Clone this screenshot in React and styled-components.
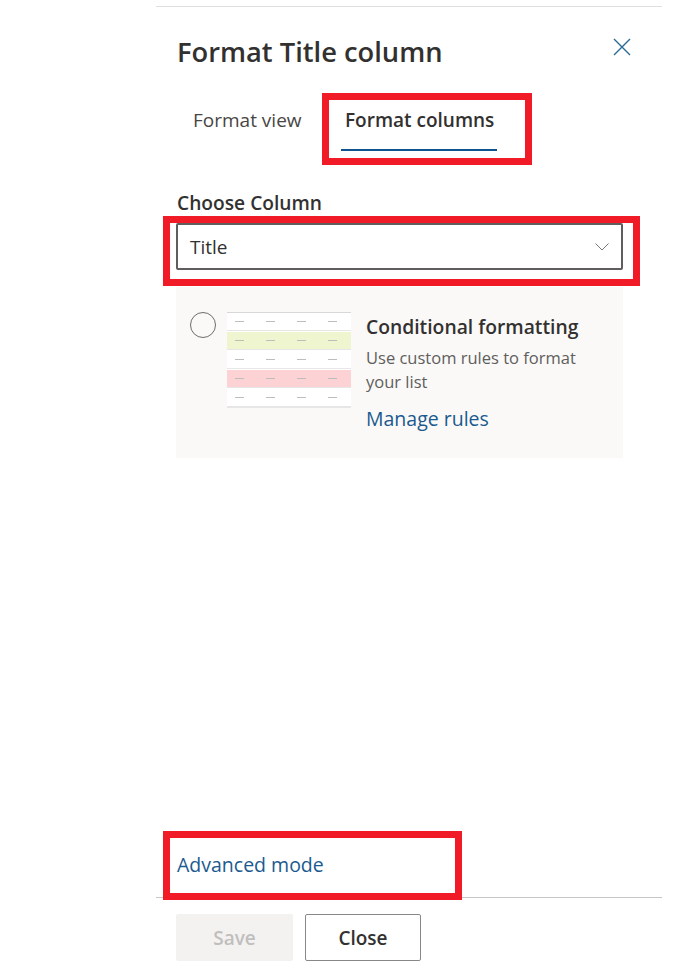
import styled, { createGlobalStyle } from "styled-components";

const GlobalStyle = createGlobalStyle`
  html, body {
    margin: 0;
    padding: 0;
    background: #fff;
  }
  body {
    font-family: "Open Sans", "Noto Sans", sans-serif;
    color: #323130;
  }
`;

const Panel = styled.div`
  box-sizing: border-box;
  width: 506px;
  height: 971px;
  margin-left: 156px;
  padding-top: 6px;
  display: flex;
  flex-direction: column;
`;

const TopRule = styled.div`
  height: 1px;
  background: #e1dfdd;
`;

const Body = styled.div`
  flex: 1;
  display: flex;
  flex-direction: column;
  padding: 0 39px 0 20px;
`;

const Header = styled.div`
  display: flex;
  justify-content: space-between;
  align-items: flex-start;
  height: 85px;
`;

const Title = styled.h1`
  margin: 27px 0 0 1px;
  font-size: 27.3px;
  line-height: 36px;
  font-weight: 600;
  color: #323130;
  white-space: nowrap;
`;

const CloseIcon = styled.svg`
  width: 18px;
  height: 18px;
  margin: 31px -8px 0 0;
  stroke: #2b6a94;
  stroke-width: 1.4;
  fill: none;
`;

const Tabs = styled.div`
  display: flex;
  height: 59px;
  margin-left: 13px;
`;

const Tab = styled.div`
  box-sizing: border-box;
  height: 59px;
  padding: 14px 4px 0;
  font-size: 19px;
  line-height: 28px;
  font-weight: ${(p) => (p.$active ? 600 : 400)};
  color: ${(p) => (p.$active ? "#323130" : "#484644")};
  border-bottom: 2px solid ${(p) => (p.$active ? "#0f548c" : "transparent")};
  width: ${(p) => p.$width}px;
  white-space: nowrap;
`;

const Highlight = styled.div`
  position: relative;
  &::after {
    content: "";
    position: absolute;
    top: ${(p) => p.$top}px;
    right: ${(p) => p.$right}px;
    bottom: ${(p) => p.$bottom}px;
    left: ${(p) => p.$left}px;
    border: 7px solid #f11a27;
    pointer-events: none;
  }
`;

const FieldLabel = styled.label`
  display: block;
  margin: 40px 0 8px 1px;
  font-size: 19.2px;
  line-height: 24px;
  font-weight: 600;
  color: #323130;
`;

const Select = styled.div`
  box-sizing: border-box;
  height: 47px;
  display: flex;
  align-items: center;
  justify-content: space-between;
  padding: 0 12px;
  border: 2px solid #605e5c;
  border-radius: 2px;
  font-size: 19px;
  color: #323130;
`;

const Chevron = styled.svg`
  width: 14px;
  height: 8px;
  stroke: #7a7876;
  stroke-width: 1;
  fill: none;
`;

const Card = styled.div`
  box-sizing: border-box;
  height: 171px;
  margin-top: 17px;
  padding: 25px 30px 0 14px;
  display: flex;
  align-items: flex-start;
  background: #faf9f8;
`;

const Radio = styled.div`
  box-sizing: border-box;
  flex: none;
  width: 26px;
  height: 26px;
  border: 1.5px solid #6f6d6b;
  border-radius: 50%;
`;

const Preview = styled.div`
  flex: none;
  width: 124px;
  margin: 0 15px 0 11px;
  background: #fff;
  border-top: 1px solid #d8d8d8;
`;

const PreviewRow = styled.div`
  height: 17px;
  display: grid;
  grid-template-columns: repeat(4, 31px);
  align-items: center;
  padding-left: 8px;
  background: ${(p) => p.$bg || "#fff"};
  border-bottom: 1px solid #e6e6e6;
  margin-bottom: 1px;
  &:last-child {
    margin-bottom: 0;
    border-bottom-width: 2px;
  }
`;

const Dash = styled.span`
  width: 9px;
  height: 1px;
  background: #bdbdbd;
`;

const CardText = styled.div`
  flex: 1;
  padding-top: 2px;
`;

const CardTitle = styled.div`
  font-size: 19.3px;
  line-height: 26px;
  font-weight: 600;
  color: #323130;
  white-space: nowrap;
`;

const CardDesc = styled.div`
  margin-top: 6px;
  font-size: 16.5px;
  line-height: 24px;
  color: #605e5c;
`;

const ActionLink = styled.a`
  display: block;
  font-size: 19.5px;
  line-height: 26px;
  color: #1b5a8f;
`;

const CardLink = styled(ActionLink)`
  margin-top: 12px;
`;

const AdvancedWrap = styled(Highlight)`
  margin-top: auto;
  margin-bottom: 19px;
  padding-left: 1px;
`;

const FooterRule = styled.div`
  height: 1px;
  background: #c8c6c4;
`;

const Footer = styled.div`
  display: flex;
  gap: 12px;
  padding: 16px 0 10px 20px;
`;

const Button = styled.button`
  box-sizing: border-box;
  width: ${(p) => p.$width}px;
  height: 47px;
  font-family: inherit;
  font-size: 19px;
  font-weight: 600;
  border-radius: 2px;
  border: 1px solid ${(p) => (p.disabled ? "#f3f2f1" : "#8a8886")};
  background: ${(p) => (p.disabled ? "#f3f2f1" : "#fff")};
  color: ${(p) => (p.disabled ? "#c0bfbd" : "#323130")};
`;

const previewRows = ["#fff", "#eff6cf", "#fff", "#fdd2d4", "#fff"];

export default function App() {
  return (
    <>
      <GlobalStyle />
      <Panel>
        <TopRule />
        <Body>
          <Header>
            <Title>Format Title column</Title>
            <CloseIcon viewBox="0 0 18 18">
              <path d="M1 1 L17 17 M17 1 L1 17" />
            </CloseIcon>
          </Header>
          <Tabs>
            <Tab $width={152}>Format view</Tab>
            <Highlight $top={1} $right={-35} $bottom={-14} $left={-19}>
              <Tab $active $width={156}>Format columns</Tab>
            </Highlight>
          </Tabs>
          <FieldLabel>Choose Column</FieldLabel>
          <Highlight $top={-7} $right={-17} $bottom={-16} $left={-13}>
            <Select>
              Title
              <Chevron viewBox="0 0 14 8">
                <path d="M0.5 0.5 L7 7 L13.5 0.5" />
              </Chevron>
            </Select>
          </Highlight>
          <Card>
            <Radio />
            <Preview>
              {previewRows.map((bg, i) => (
                <PreviewRow key={i} $bg={bg}>
                  <Dash />
                  <Dash />
                  <Dash />
                  <Dash />
                </PreviewRow>
              ))}
            </Preview>
            <CardText>
              <CardTitle>Conditional formatting</CardTitle>
              <CardDesc>Use custom rules to format your list</CardDesc>
              <CardLink>Manage rules</CardLink>
            </CardText>
          </Card>
          <AdvancedWrap $top={-21} $right={161} $bottom={-22} $left={-13}>
            <ActionLink>Advanced mode</ActionLink>
          </AdvancedWrap>
        </Body>
        <FooterRule />
        <Footer>
          <Button disabled $width={117}>Save</Button>
          <Button $width={116}>Close</Button>
        </Footer>
      </Panel>
    </>
  );
}
